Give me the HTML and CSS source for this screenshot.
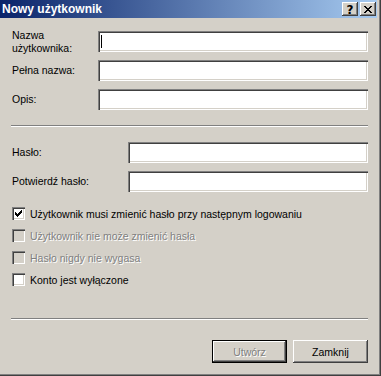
FILE: index.html
```html
<!DOCTYPE html>
<html lang="pl">
<head>
    <meta charset="UTF-8">
    <title>Nowy użytkownik</title>
    <link rel="stylesheet" href="styles.css">
</head>
<body>
    <div class="window">
        <div class="titlebar">
            <span class="title">Nowy użytkownik</span>
            <div class="caption-buttons">
                <div class="cap-btn help">?</div>
                <div class="cap-btn close">
                    <svg width="8" height="7" viewBox="0 0 8 7">
                        <path d="M0 0h2v1h-2zM6 0h2v1h-2zM1 1h2v1h-2zM5 1h2v1h-2zM2 2h4v1h-4zM3 3h2v1h-2zM2 4h4v1h-4zM1 5h2v1h-2zM5 5h2v1h-2zM0 6h2v1h-2zM6 6h2v1h-2z" fill="#000"/>
                    </svg>
                </div>
            </div>
        </div>

        <div class="client">
            <div class="fields first">
                <label class="lbl wrap">Nazwa użytkownika:</label>
                <div class="edit"><span class="caret"></span></div>
                <label class="lbl">Pełna nazwa:</label>
                <div class="edit"></div>
                <label class="lbl">Opis:</label>
                <div class="edit"></div>
            </div>

            <div class="separator"></div>

            <div class="fields second">
                <label class="lbl">Hasło:</label>
                <div class="edit"></div>
                <label class="lbl">Potwierdź hasło:</label>
                <div class="edit"></div>
            </div>

            <div class="checks">
                <div class="check">
                    <span class="box checked">
                        <svg width="7" height="7" viewBox="0 0 7 7">
                            <path d="M6 0h1v3h-1zM5 1h1v3h-1zM4 2h1v3h-1zM3 3h1v3h-1zM2 4h1v3h-1zM1 3h1v3h-1zM0 2h1v3h-1z" fill="#000"/>
                        </svg>
                    </span>
                    <span class="text">Użytkownik musi zmienić hasło przy następnym logowaniu</span>
                </div>
                <div class="check disabled">
                    <span class="box"></span>
                    <span class="text">Użytkownik nie może zmienić hasła</span>
                </div>
                <div class="check disabled">
                    <span class="box"></span>
                    <span class="text">Hasło nigdy nie wygasa</span>
                </div>
                <div class="check">
                    <span class="box"></span>
                    <span class="text">Konto jest wyłączone</span>
                </div>
            </div>

            <div class="separator bottom"></div>

            <div class="buttons">
                <div class="btn default disabled">Utwórz</div>
                <div class="btn">Zamknij</div>
            </div>
        </div>
    </div>
</body>
</html>
```

FILE: styles.css
```css
body {
    margin: 0;
    font-family: "Liberation Sans", Arial, sans-serif;
    font-size: 10.5px;
    color: #000;
    background-color: #d4d0c8;
}
.window {
    width: 381px;
    height: 376px;
    box-sizing: border-box;
    padding: 0 4px 4px 0;
    background-color: #d4d0c8;
    box-shadow: inset -1px -1px #404040, inset -2px -2px #808080;
}
.titlebar {
    height: 18px;
    display: flex;
    align-items: center;
    justify-content: space-between;
    background: linear-gradient(to right, #0a246a, #a6caf0);
}
.title {
    color: #fff;
    font-weight: bold;
    font-size: 12px;
    padding-left: 2px;
}
.caption-buttons {
    display: flex;
    gap: 2px;
    padding-right: 1px;
}
.cap-btn {
    width: 16px;
    height: 14px;
    box-sizing: border-box;
    background-color: #d4d0c8;
    box-shadow: inset -1px -1px #404040, inset 1px 1px #fff, inset -2px -2px #808080;
    display: flex;
    align-items: center;
    justify-content: center;
}
.help {
    font-weight: bold;
    font-size: 12px;
    line-height: 14px;
    font-family: "DejaVu Sans", sans-serif;
    padding-top: 1px;
}
.client {
    padding: 13px 0 0 12px;
}
.fields {
    display: grid;
    grid-auto-rows: 21px;
    row-gap: 8px;
    align-items: center;
}
.fields.first {
    grid-template-columns: 86px 270px;
}
.fields.second {
    grid-template-columns: 116px 240px;
    margin-top: 15px;
}
.lbl {
    line-height: 13px;
}
.lbl.wrap {
    width: 70px;
}
.edit {
    height: 21px;
    box-sizing: border-box;
    background-color: #fff;
    box-shadow: inset 1px 1px #808080, inset 2px 2px #404040, inset -1px -1px #fff, inset -2px -2px #d4d0c8;
    padding: 4px 0 0 3px;
}
.caret {
    display: block;
    width: 1px;
    height: 13px;
    background-color: #000;
}
.separator {
    width: 357px;
    margin: 15px 0 0 -1px;
    height: 0;
    border-top: 1px solid #808080;
    border-bottom: 1px solid #fff;
}
.checks {
    margin-top: 15px;
    display: flex;
    flex-direction: column;
    gap: 9px;
}
.check {
    display: flex;
    align-items: center;
    gap: 5px;
    height: 13px;
}
.box {
    width: 13px;
    height: 13px;
    box-sizing: border-box;
    background-color: #fff;
    box-shadow: inset 1px 1px #808080, inset 2px 2px #404040, inset -1px -1px #fff, inset -2px -2px #d4d0c8;
    display: flex;
    align-items: center;
    justify-content: center;
}
.check.disabled .box {
    background-color: #d4d0c8;
}
.check.disabled .text,
.btn.disabled {
    color: #808080;
    text-shadow: 1px 1px #fff;
}
.separator.bottom {
    margin-top: 32px;
}
.buttons {
    display: flex;
    justify-content: flex-end;
    gap: 6px;
    margin: 20px 9px 0 0;
}
.btn {
    width: 75px;
    height: 23px;
    box-sizing: border-box;
    background-color: #d4d0c8;
    box-shadow: inset -1px -1px #404040, inset 1px 1px #fff, inset -2px -2px #808080;
    display: flex;
    align-items: center;
    justify-content: center;
}
.btn.default {
    border: 1px solid #000;
}
```
